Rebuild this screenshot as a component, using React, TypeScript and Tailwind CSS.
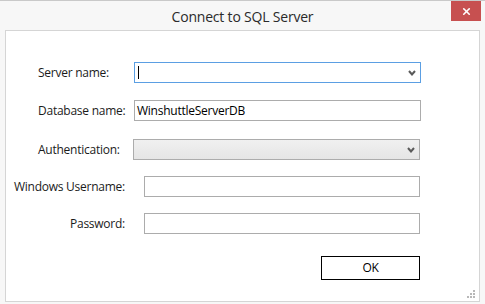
import { X } from 'lucide-react'

const font = { fontFamily: '"Open Sans", "Noto Sans", sans-serif' }

function Chevron() {
  return (
    <svg width="8" height="6" viewBox="0 0 8 6" className="shrink-0">
      <polyline points="1,1 4,4.5 7,1" fill="none" stroke="#5a5a5a" strokeWidth="2" />
    </svg>
  )
}

function Grip() {
  const dots = [
    [8, 0],
    [8, 3],
    [5, 3],
    [8, 6],
    [5, 6],
    [2, 6],
  ]
  return (
    <svg width="10" height="8" viewBox="0 0 10 8" className="absolute bottom-[3px] right-[4px]">
      {dots.map(([x, y]) => (
        <rect key={`${x}-${y}`} x={x} y={y} width="2" height="2" fill="#b8b8b8" />
      ))}
    </svg>
  )
}

export default function App() {
  return (
    <div
      className="relative flex h-[304px] w-[485px] flex-col border-t border-[#c9c9c9] bg-[#f7f7f7] text-[12px] tracking-[-0.25px] text-[#1b1b1b]"
      style={font}
    >
      {/* title bar */}
      <div className="relative flex h-[29px] items-center justify-center">
        <span className="pt-[1px] text-[14px] tracking-[-0.2px] text-[#2a2a2a]">Connect to SQL Server</span>
        <button
          type="button"
          className="absolute right-[4px] top-0 flex h-[20px] w-[30px] items-center justify-center bg-[#c75050] text-white"
        >
          <X className="h-[11px] w-[11px]" strokeWidth={3.5} />
        </button>
      </div>

      {/* content panel */}
      <div className="relative mx-[5px] mb-[2px] flex flex-1 flex-col border border-[#d5d5d5] bg-white pt-[31px]">
        <div className="flex h-[21px] items-center">
          <span className="w-[128px] pl-[32px]">Server name:</span>
          <div className="flex h-[21px] w-[287px] items-center justify-between border border-[#5b9fe3] pl-[3px] pr-[4px]">
            <span className="h-[13px] w-[1px] bg-black" />
            <Chevron />
          </div>
        </div>

        <div className="mt-[17px] flex h-[21px] items-center">
          <span className="w-[128px] pl-[32px]">Database name:</span>
          <div className="flex h-[21px] w-[287px] items-center border border-[#acacac] pl-[2px] text-black">
            WinshuttleServerDB
          </div>
        </div>

        <div className="mt-[18px] flex h-[21px] items-center">
          <span className="w-[127px] pl-[32px]">Authentication:</span>
          <div className="flex h-[21px] w-[287px] items-center justify-end border border-[#acacac] bg-gradient-to-b from-[#f0f0f0] to-[#e5e5e5] pr-[4px]">
            <Chevron />
          </div>
        </div>

        <div className="mt-[16px] flex h-[21px] items-center">
          <span className="w-[119px] text-right">Windows Username:</span>
          <div className="ml-[19px] h-[21px] w-[276px] border border-[#acacac]" />
        </div>

        <div className="mt-[16px] flex h-[21px] items-center">
          <span className="w-[119px] text-right">Password:</span>
          <div className="ml-[19px] h-[21px] w-[276px] border border-[#acacac]" />
        </div>

        <div className="mt-[22px] flex justify-end pr-[59px]">
          <button
            type="button"
            className="flex h-[24px] w-[99px] items-center justify-center border border-black bg-white text-[12px] text-black"
          >
            OK
          </button>
        </div>

        <Grip />
      </div>
    </div>
  )
}
